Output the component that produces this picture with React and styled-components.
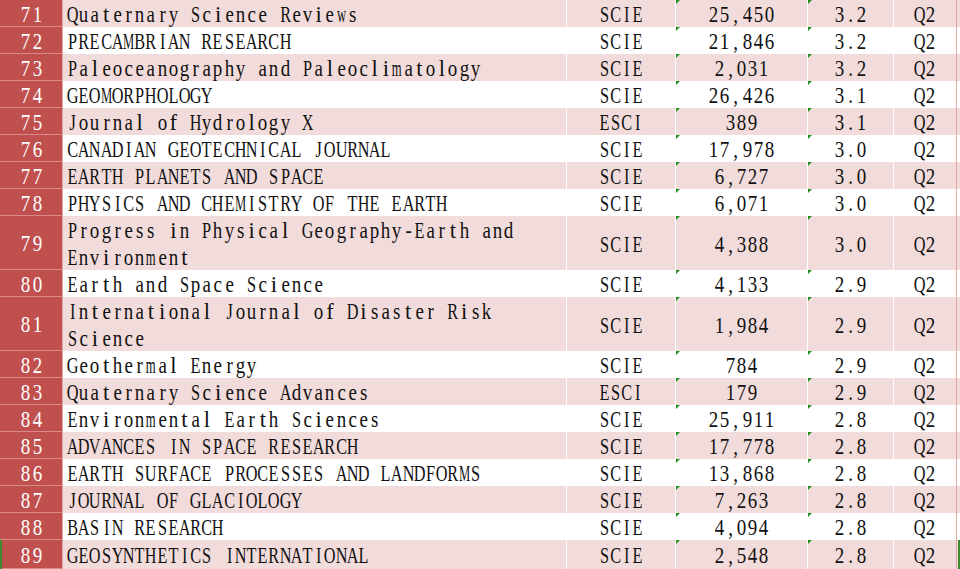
import React from "react";
import styled, { createGlobalStyle, css } from "styled-components";

const rows = [
  [71, "Quaternary Science Reviews", "SCIE", "25,450", "3.2", "Q2"],
  [72, "PRECAMBRIAN RESEARCH", "SCIE", "21,846", "3.2", "Q2"],
  [73, "Paleoceanography and Paleoclimatology", "SCIE", "2,031", "3.2", "Q2"],
  [74, "GEOMORPHOLOGY", "SCIE", "26,426", "3.1", "Q2"],
  [75, "Journal of Hydrology X", "ESCI", "389", "3.1", "Q2"],
  [76, "CANADIAN GEOTECHNICAL JOURNAL", "SCIE", "17,978", "3.0", "Q2"],
  [77, "EARTH PLANETS AND SPACE", "SCIE", "6,727", "3.0", "Q2"],
  [78, "PHYSICS AND CHEMISTRY OF THE EARTH", "SCIE", "6,071", "3.0", "Q2"],
  [79, "Progress in Physical Geography-Earth and Environment", "SCIE", "4,388", "3.0", "Q2"],
  [80, "Earth and Space Science", "SCIE", "4,133", "2.9", "Q2"],
  [81, "International Journal of Disaster Risk Science", "SCIE", "1,984", "2.9", "Q2"],
  [82, "Geothermal Energy", "SCIE", "784", "2.9", "Q2"],
  [83, "Quaternary Science Advances", "ESCI", "179", "2.9", "Q2"],
  [84, "Environmental Earth Sciences", "SCIE", "25,911", "2.8", "Q2"],
  [85, "ADVANCES IN SPACE RESEARCH", "SCIE", "17,778", "2.8", "Q2"],
  [86, "EARTH SURFACE PROCESSES AND LANDFORMS", "SCIE", "13,868", "2.8", "Q2"],
  [87, "JOURNAL OF GLACIOLOGY", "SCIE", "7,263", "2.8", "Q2"],
  [88, "BASIN RESEARCH", "SCIE", "4,094", "2.8", "Q2"],
  [89, "GEOSYNTHETICS INTERNATIONAL", "SCIE", "2,548", "2.8", "Q2"],
];

const tallRows = [79, 81];

// how much each kind of letter is squeezed to sit in a half-width cell
function squeeze(ch) {
  if ("mwMW".includes(ch)) return 0.56;
  if (/[A-Z]/.test(ch)) return 0.72;
  if ("ijlft".includes(ch)) return 1;
  return 0.84;
}

// the sheet font is a condensed serif with fixed-width latin, so every
// character gets its own half-width cell
function Mono({ text }) {
  const words = String(text).split(" ");
  return words.map((word, i) => (
    <React.Fragment key={i}>
      {i > 0 && <Glyph $sx={1}>{"\u00a0"}</Glyph>}
      <Word>
        {[...word].map((ch, j) => (
          <Glyph key={j} $sx={squeeze(ch)}>
            {ch}
          </Glyph>
        ))}
      </Word>
    </React.Fragment>
  ));
}

export default function App() {
  return (
    <>
      <GlobalStyle />
      <Sheet>
        {rows.map(([num, name, kind, cites, factor, zone], i) => (
          <Row
            key={num}
            $tall={tallRows.includes(num)}
            $pink={i % 2 === 0}
            $selected={num === 89}
          >
            <IndexCell>
              <CellText>
                <Mono text={num} />
              </CellText>
            </IndexCell>
            <NameCell>
              <CellText $wrap>
                <Mono text={name} />
              </CellText>
            </NameCell>
            <CenterCell>
              <CellText>
                <Mono text={kind} />
              </CellText>
            </CenterCell>
            <CenterCell $flag>
              <CellText>
                <Mono text={cites} />
              </CellText>
            </CenterCell>
            <CenterCell $flag>
              <CellText>
                <Mono text={factor} />
              </CellText>
            </CenterCell>
            <LastCell>
              <CellText>
                <Mono text={zone} />
              </CellText>
            </LastCell>
            <Filler />
          </Row>
        ))}
      </Sheet>
    </>
  );
}

const GlobalStyle = createGlobalStyle`
  body {
    margin: 0;
    background: #ffffff;
    overflow: hidden;
  }
`;

const Sheet = styled.div`
  width: 960px;
  height: 569px;
  overflow: hidden;
  font-family: "Liberation Serif", "Noto Sans CJK SC", serif;
  font-size: 22.6px;
  line-height: 27px;
  color: #111111;
`;

const Row = styled.div`
  display: grid;
  grid-template-columns: 63px 504px 109px 132px 86px 63px 3px;
  height: ${(p) => (p.$tall ? "54px" : "27px")};
  background: ${(p) => (p.$pink ? "#f2dcdb" : "#ffffff")};
  position: relative;
  ${(p) =>
    p.$selected &&
    css`
      height: 29px;
      &::after {
        content: "";
        position: absolute;
        inset: 0;
        border-left: 2px solid #3c8a32;
        border-right: 2px solid #3c8a32;
        pointer-events: none;
      }
    `}
`;

const Cell = styled.div`
  box-sizing: border-box;
  display: flex;
  align-items: center;
  padding-top: 2px;
  border-right: 1px solid #ffffff;
  position: relative;
  overflow: hidden;
`;

const IndexCell = styled(Cell)`
  justify-content: center;
  background: #c0504d;
  color: #ffffff;
  border-right: 1px solid #e3a9a7;
  border-bottom: 1px solid #d98b89;
  padding-left: 1px;
`;

const NameCell = styled(Cell)`
  padding-left: 4px;
  padding-right: 4px;
`;

const CenterCell = styled(Cell)`
  justify-content: center;
  ${(p) =>
    p.$flag &&
    css`
      &::before {
        content: "";
        position: absolute;
        top: 0;
        left: 0;
        border-top: 4px solid #1f8f1f;
        border-right: 4px solid transparent;
      }
    `}
`;

const LastCell = styled(CenterCell)`
  border-right: 1px solid #e2a8a6;
`;

const Filler = styled.div``;

const CellText = styled.span`
  display: block;
  white-space: ${(p) => (p.$wrap ? "normal" : "nowrap")};
`;

const Word = styled.span`
  white-space: nowrap;
`;

const Glyph = styled.span`
  display: inline-flex;
  justify-content: center;
  width: 11.2px;
  transform: scaleX(${(p) => p.$sx});
`;
